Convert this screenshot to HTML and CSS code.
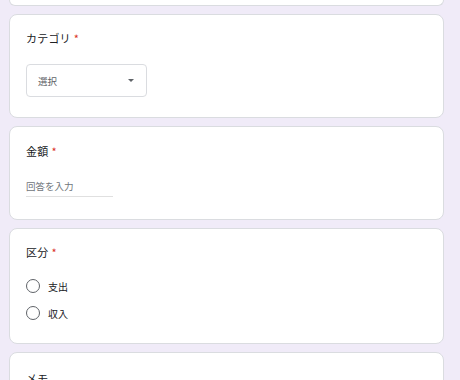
FILE: index.html
```html
<!DOCTYPE html>
<html lang="ja">
<head>
<meta charset="utf-8">
<link rel="stylesheet" href="styles.css">
</head>
<body>
<main class="form">
  <div class="card stub"></div>

  <section class="card q-category">
    <div class="q-title">カテゴリ<span class="req">*</span></div>
    <div class="select">
      <span class="select-text">選択</span>
      <span class="caret"></span>
    </div>
  </section>

  <section class="card q-amount">
    <div class="q-title">金額<span class="req">*</span></div>
    <div class="text-input">回答を入力</div>
  </section>

  <section class="card q-type">
    <div class="q-title">区分<span class="req">*</span></div>
    <div class="radios">
      <label class="radio"><span class="circle"></span><span class="radio-label">支出</span></label>
      <label class="radio"><span class="circle"></span><span class="radio-label">収入</span></label>
    </div>
  </section>

  <section class="card q-memo">
    <div class="q-title">メモ</div>
  </section>
</main>
</body>
</html>
```

FILE: styles.css
```css
* { box-sizing: border-box; }
html, body { margin: 0; padding: 0; }
body {
  background: #f0ebf8;
  font-family: "Noto Sans CJK JP", "Noto Sans", Roboto, sans-serif;
  color: #202124;
  width: 460px;
  height: 380px;
  overflow: hidden;
}
.form {
  width: 435px;
  margin-left: 9px;
  display: flex;
  flex-direction: column;
  gap: 8px;
}
.card {
  background: #fff;
  border: 1px solid #dadce0;
  border-radius: 8px;
  padding: 0 16px;
}
.card.stub {
  height: 6px;
  border-top: none;
  border-radius: 0 0 8px 8px;
}
.q-title {
  font-size: 11px;
  line-height: 16px;
  height: 16px;
  letter-spacing: 0.2px;
}
.req {
  color: #d93025;
  margin-left: 3px;
}
.q-category { padding-top: 15px; padding-bottom: 20px; }
.select {
  margin-top: 18px;
  width: 121px;
  height: 33px;
  border: 1px solid #dadce0;
  border-radius: 4px;
  display: flex;
  align-items: center;
  justify-content: space-between;
  padding: 0 12px 0 11px;
}
.select-text {
  font-size: 9.5px;
  color: #5f6368;
}
.caret {
  width: 0;
  height: 0;
  border-left: 3px solid transparent;
  border-right: 3px solid transparent;
  border-top: 3px solid #5f6368;
}
.q-amount { padding-top: 16px; padding-bottom: 22px; }
.text-input {
  margin-top: 21px;
  width: 87px;
  font-size: 9.5px;
  line-height: 13px;
  color: #70757a;
  padding-bottom: 3px;
  border-bottom: 1px solid #e0e0e0;
}
.q-type { padding-top: 15px; padding-bottom: 20px; }
.radios {
  margin-top: 16px;
  display: flex;
  flex-direction: column;
  gap: 7px;
}
.radio {
  display: flex;
  align-items: center;
  height: 20px;
  gap: 8px;
}
.circle {
  width: 14px;
  height: 14px;
  border: 1.5px solid #5f6368;
  border-radius: 50%;
}
.radio-label {
  font-size: 10px;
}
.q-memo { padding-top: 17px; height: 60px; }
```
